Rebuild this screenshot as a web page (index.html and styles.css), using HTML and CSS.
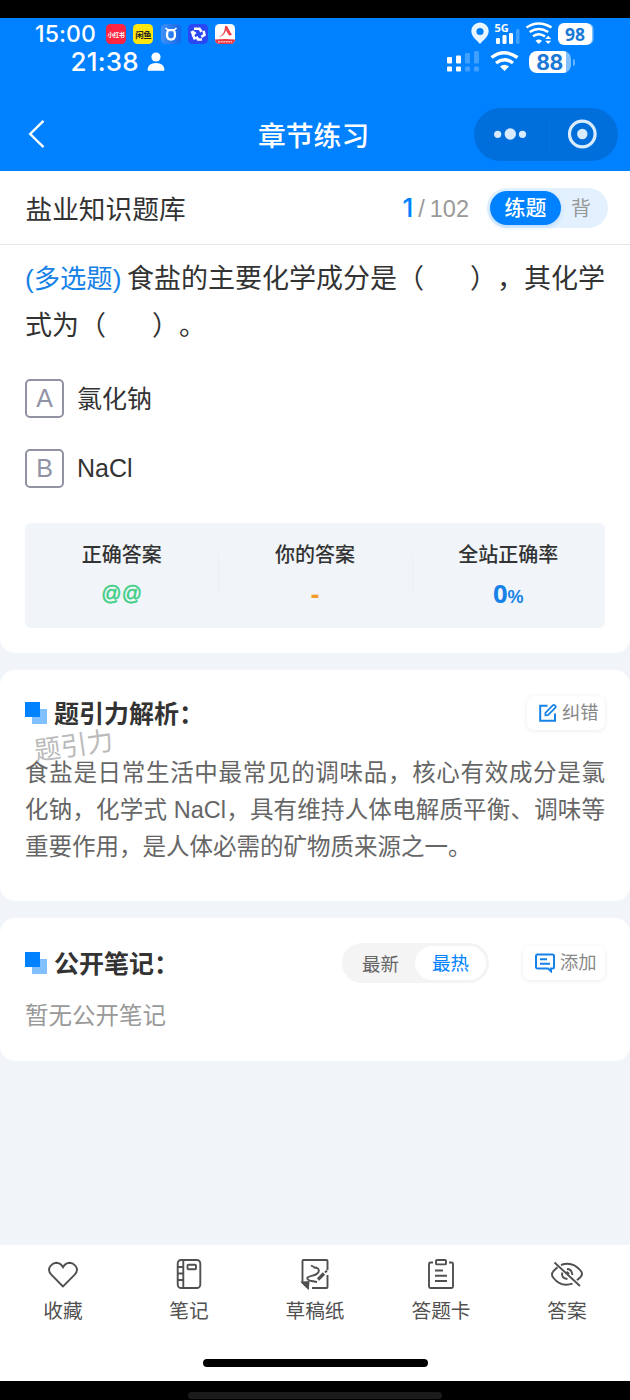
FILE: index.html
```
<!DOCTYPE html>
<html lang="zh-CN">
<head>
<meta charset="utf-8">
<title>章节练习</title>
<link rel="stylesheet" href="styles.css">
</head>
<body>
<div class="phone">
  <header class="header">
    <div class="status status-outer">
      <span class="time-outer">15:00</span>
      <div class="apps">
        <span class="app app-red">小红书</span>
        <span class="app app-yellow">闲鱼</span>
        <svg class="app app-sky" viewBox="0 0 20 20"><path d="M4.500 4 7 6.200M15.500 4 13 6.200" stroke="#fff" stroke-width="1.600"/><path d="M7.300 6.200Q6 8 6 11q0 4.500 4 4.500t4-4.500q0-3-1.300-4.800Z" fill="none" stroke="#fff" stroke-width="2.300"/></svg>
        <svg class="app app-indigo" viewBox="0 0 20 20"><g fill="none" stroke="#fff" stroke-width="2.600"><path d="M6 4.800h5.500l2 3M15.500 6.800l1 4-3.200 2M14 15.500h-4l-1.500-3M7 15.500 5 11l2.500-2.800M3 9l3-1.500"/></g></svg>
        <svg class="app app-white" viewBox="0 0 20 20"><path d="M4 13Q10 10 10 2l2 0 5 9-3 .5-3-5Q9 12 4 13Z" fill="#f04450"/><path d="M0 15.500Q10 14.500 20 15.500V20H0Z" fill="#ee3341"/><path d="M3 17.800h14" stroke="#fbb" stroke-width="1.400" stroke-dasharray="2 .6"/></svg>
      </div>
      <svg class="signals-outer" viewBox="0 0 82 32" width="82" height="32">
        <g transform="translate(0 3)">
        <path d="M9 1.500a8.700 8.700 0 0 1 8.700 8.700C17.700 16 11 20 9 23 7 20 .3 16 .3 10.200A8.700 8.700 0 0 1 9 1.500Zm0 5.400a3.600 3.600 0 1 0 0 7.200 3.600 3.600 0 0 0 0-7.200Z" fill="#eaf6ff" fill-rule="evenodd"/>
        <text x="23.500" y="10.500" class="label-5g">5G</text>
        <g fill="#fff"><rect x="25" y="17" width="4" height="6" rx="1.200"/><rect x="31.500" y="14" width="4" height="9" rx="1.200"/><rect x="38" y="12" width="4" height="11" rx="1.200"/><rect x="45" y="8" width="3.500" height="15" rx="1.200" opacity=".25"/></g>
        <g fill="none" stroke="#fff" stroke-width="2.500"><path d="M55.500 6.500q12-8 25 0"/><path d="M58.700 11q9-6 18.500 0"/><path d="M62 15.300q6-4.200 12 .2"/></g>
        <path d="M64.500 19.800q3.500-2.500 6.500 0L67.700 23Z" fill="#fff"/><path d="m74.200 18 3-3.200 3 3.200ZM74.200 19.800h6l-3 3.200Z" fill="#fff"/>
        </g>
      </svg>
      <span class="battery battery-outer">98</span>
    </div>
    <div class="status status-inner">
      <span class="time-inner">21:38</span>
      <svg class="person" viewBox="0 0 18 20" width="18" height="20"><circle cx="9" cy="5" r="4.600" fill="#fff"/><path d="M.5 18Q1 11 9 11t8.500 7q0 .8-1 .8h-15q-1 0-1-.8Z" fill="#fff"/></svg>
      <svg class="signals-inner" viewBox="0 0 72 24" width="72" height="24">
        <g fill="#fff"><rect x="0" y="7" width="5" height="6.500" rx="1"/><rect x="0" y="16.500" width="5" height="5" rx="1"/><rect x="9" y="5.500" width="5" height="8" rx="1"/><rect x="9" y="16.500" width="5" height="5" rx="1"/></g>
        <g fill="#fff" opacity=".25"><rect x="18" y="3" width="5" height="10.500" rx="1"/><rect x="18" y="16.500" width="5" height="5" rx="1"/><rect x="27" y="1" width="5" height="12.500" rx="1"/><rect x="27" y="16.500" width="5" height="5" rx="1"/></g>
        <g fill="none" stroke="#fff" stroke-width="3.400"><path d="M44.500 7.500q12.500-9.500 26 0"/><path d="M49 13q8.500-6.500 17 0"/></g><path d="M53 16.500q4.500-3.500 9 0L57.500 21Z" fill="#fff"/>
      </svg>
      <span class="battery battery-inner">88</span>
      <i class="battery-tip"></i>
    </div>
    <nav class="nav">
      <svg class="back" viewBox="0 0 18 30" width="18" height="30"><path d="M16.500 1.800 3.200 15 16.500 28.200" fill="none" stroke="#fff" stroke-width="2.400"/></svg>
      <h1 class="nav-title">章节练习</h1>
      <div class="capsule">
        <svg viewBox="0 0 72 53"><g fill="#d9ebff"><circle cx="23.700" cy="26.300" r="3.600"/><circle cx="36.300" cy="26" r="5.700"/><circle cx="48.500" cy="26.300" r="3.600"/></g></svg>
        <svg class="capsule-close" viewBox="0 0 72 53"><circle cx="36.300" cy="26" r="12.800" fill="none" stroke="#d9ebff" stroke-width="3.200"/><circle cx="36.300" cy="26" r="5.200" fill="#d9ebff"/></svg>
      </div>
    </nav>
  </header>

  <section class="card card-question">
    <div class="bank">
      <h2 class="bank-title">盐业知识题库</h2>
      <div class="progress"><b>1</b><span class="slash">/</span><span>102</span></div>
      <div class="mode"><span class="mode-on">练题</span><span class="mode-off">背</span></div>
    </div>
    <p class="question"><span class="q-type">(多选题)</span>食盐的主要化学成分是（<i class="blank"></i>），其化学<br>式为（<i class="blank"></i>）。</p>
    <div class="options">
      <div class="option"><span class="key">A</span><span class="option-text">氯化钠</span></div>
      <div class="option"><span class="key">B</span><span>NaCl</span></div>
    </div>
    <div class="stats">
      <div class="stat"><span>正确答案</span><b class="green">@@</b></div>
      <div class="stat"><span>你的答案</span><b class="orange">-</b></div>
      <div class="stat"><span>全站正确率</span><b class="blue">0<small>%</small></b></div>
    </div>
  </section>

  <section class="card card-analysis">
    <div class="head">
      <i class="mark"></i><h3>题引力解析：</h3>
      <button class="chip"><svg viewBox="0 0 20 20" width="20" height="20"><path d="M9.500 2.800H2.200v15H17v-7.300" fill="none" stroke="#1682e8" stroke-width="2"/><path d="m7.400 9.800 7.600-7.600q.8-.8 1.600 0l.9.900q.7.800 0 1.500l-7.600 7.600-2.500.1Z" fill="none" stroke="#1682e8" stroke-width="1.700"/></svg><span>纠错</span></button>
    </div>
    <span class="watermark">题引力</span>
    <div class="analysis">
      <p class="full">食盐是日常生活中最常见的调味品，核心有效成分是氯</p>
      <p class="full">化钠，化学式 NaCl，具有维持人体电解质平衡、调味等</p>
      <p>重要作用，是人体必需的矿物质来源之一。</p>
    </div>
  </section>

  <section class="card card-notes">
    <div class="head">
      <i class="mark"></i><h3>公开笔记：</h3>
      <div class="sort"><span>最新</span><span class="sort-on">最热</span></div>
      <button class="chip chip-add"><svg viewBox="0 0 22 20" width="22" height="20"><path d="M3.500 1.500h15q1.500 0 1.500 1.500v11q0 1.500-1.500 1.500H17v2.800l-3-2.800H3.500Q2 15.500 2 14V3Q2 1.500 3.500 1.500Z" fill="none" stroke="#1682e8" stroke-width="2"/><path d="M6 6.300h7M6 10.800h10" stroke="#1682e8" stroke-width="2"/></svg><span>添加</span></button>
    </div>
    <p class="empty">暂无公开笔记</p>
  </section>

  <footer class="tabs">
    <div class="tab"><svg viewBox="0 0 32 32"><path d="M16 28.500 4.300 16.700Q.3 12.300 3.400 8 5.900 5 9.300 4.800q4.200.2 6.700 4.400 2.500-4.200 6.700-4.400 3.400.2 5.900 3.200 3.100 4.300-.9 8.700Z"/></svg><span>收藏</span></div>
    <div class="tab"><svg viewBox="0 0 32 32"><rect x="4.700" y="2" width="22.600" height="28" rx="3.500"/><path d="M10.300 2v28M5 9h5M5 15.500h5M5 22h5"/><rect x="14.500" y="6.700" width="8.500" height="4.600" rx="1"/></svg><span>笔记</span></div>
    <div class="tab"><svg viewBox="0 0 32 32"><path d="M28.500 12V3q0-1-1-1H4.500q-1 0-1 1v21.500L9 30M13 30h14.500q1 0 1-1V17M12 7.500l5 2.500M14.500 9.500q6.500 0 5 4.500c-2 4-7 3-11 5.500q-1 2.500 4 3.500l5.500 1"/><path d="m3.500 24.500 6-.5-.5 6Z" fill="#505050"/><path d="m19 21.500 6-6" stroke-width="3.200"/><path d="m26 14.500 2-2"/></svg><span>草稿纸</span></div>
    <div class="tab"><svg viewBox="0 0 32 32"><path d="M8 4.500H5.500Q4 4.500 4 6v22.500Q4 30 5.500 30h21q1.500 0 1.500-1.500V6q0-1.500-1.500-1.500H24"/><rect x="11" y="2" width="10" height="4.400" rx="1"/><path d="M10 12.500h8M10 17.800h12M10 23h12"/></svg><span>答题卡</span></div>
    <div class="tab"><svg viewBox="0 0 32 32"><path d="M3.500 4.500 29 28M10 7Q21 2.700 29.500 12.500q3 3.500 0 6.500L26 22.200M21.500 25.700Q10 29.500 2.500 20q-3-3.500 0-7L6.500 9.200M16 11q5 .2 5.300 6M11.300 14.500q-1.300 6 5.200 6.500M15.500 14q1.500.5 2.500 2"/></svg><span>答案</span></div>
  </footer>
  <div class="home"><i></i></div>
  <div class="home-outer"><i></i></div>
</div>
</body>
</html>
```

FILE: styles.css
```
* { box-sizing: border-box; margin: 0; padding: 0; }
body {
  background: #000;
  color: #333;
  font-family: "Liberation Sans", "Noto Sans CJK SC", sans-serif;
  text-spacing-trim: space-all;
}
i { font-style: normal; }
svg { display: block; flex: none; }
.phone {
  width: 630px;
  height: 1400px;
  padding-top: 18px;
  background: #f1f5f9 linear-gradient(#000 18px, transparent 18px);
  display: flex;
  flex-direction: column;
  overflow: hidden;
  white-space: nowrap;
}

/* Header */
.header { height: 153px; background: #0081ff; color: #fff; flex: none; }
.status { display: flex; align-items: center; font-family: Inter, "Noto Sans CJK SC", sans-serif; }
.status-outer { height: 32px; padding-left: 35px; }
.time-outer { width: 71px; font-size: 23px; font-weight: 500; letter-spacing: .1px; }
.apps { display: flex; gap: 7.300px; width: 365px; }
.app {
  width: 20px; height: 20px; border-radius: 4.500px; flex: none;
  display: flex; align-items: center; justify-content: center;
  font: 700 6px "Noto Sans CJK SC", sans-serif; letter-spacing: -.4px;
}
.app-red { background: #ff2442; }
.app-yellow { background: #ffe60f; color: #222; font-size: 8.500px; }
.app-sky { background: linear-gradient(90deg, #3e91f7, #1766e8); }
.app-indigo { background: #2947f5; }
.app-white { background: #fff; }
.signals-outer { margin-right: 5px; overflow: visible; }
.label-5g { font: 700 11px "Open Sans", sans-serif; fill: #fff; }
.battery {
  display: flex; align-items: center; justify-content: center; flex: none;
  background: #fff; color: #1a78d6; font-weight: 600;
}
.battery-outer { width: 34px; height: 22px; border-radius: 6px; font: 700 17.500px "Noto Sans", sans-serif; box-shadow: 2px 0 0 -0.500px #80c0ff; }
.status-inner { height: 24px; padding-left: 70.500px; }
.time-inner { width: 76px; margin-top: -2px; font-size: 26px; font-weight: 500; letter-spacing: .2px; }
.signals-inner { margin-left: 282px; }
.person { margin-top: -1px; }
.battery-inner {
  width: 42px; height: 22px; margin-left: 10px; border-radius: 8px;
  font-size: 21px; font-weight: 700; letter-spacing: -.3px; background: linear-gradient(90deg, #fff 37px, #80c0ff 37px);
}
.battery-tip { width: 2px; height: 7px; margin-left: 2px; border-radius: 0 2px 2px 0; background: #66b3ff; }
.nav { display: flex; align-items: center; height: 74px; margin-top: 23px; padding: 0 12px 0 27px; }
.nav-title { width: 216px; margin-left: 213px; font-size: 27.800px; font-weight: 500; line-height: 40px; padding-top: 5px; }
.capsule { display: flex; width: 144px; height: 53px; border-radius: 27px; background: #006fdc; }
.capsule svg { width: 72px; height: 53px; }
.capsule-close { background: linear-gradient(#0069d0, #0069d0) 0 50% / 1px 35px no-repeat; }

/* Cards */
.card { background: #fff; border-radius: 15px; padding: 0 25px; flex: none; }
.card-question { height: 482px; border-radius: 0 0 15px 15px; }
.bank { display: flex; align-items: center; height: 74px; margin: 0 -25px; padding: 0 22px 0 25.500px; border-bottom: 1px solid #e6e6e6; }
.bank-title { flex: 1; font-size: 26.700px; font-weight: 400; line-height: 40px; padding-top: 4px; }
.progress { display: flex; align-items: baseline; margin-right: 18px; font-size: 23.500px; color: #999; }
.progress b { font: 500 26px Inter, sans-serif; color: #0081ff; }
.slash { margin: 0 5px; }
.mode { display: flex; align-items: center; width: 121px; height: 40px; padding: 0 3px; border-radius: 20px; background: #e3f1ff; }
.mode-on { width: 71px; height: 34px; border-radius: 17px; background: #0081ff; color: #fff; font-size: 21px; font-weight: 500; line-height: 34px; text-align: center; box-shadow: 0 2px 5px #0081ff33; }
.mode-off { margin-left: 10px; padding-top: 2px; font-size: 20px; line-height: 34px; color: #999; }
.question { padding-top: 11px; font-size: 27px; line-height: 47px; color: #333; }
.q-type { display: inline-block; width: 102px; font-size: 26.300px; color: #1682e8; }
.blank { display: inline-block; width: 46px; }
.options { display: flex; flex-direction: column; gap: 32px; margin-top: 29px; }
.option { display: flex; align-items: center; gap: 13px; height: 38px; font-size: 25px; }
.option-text { margin-top: -3px; }
.key { display: flex; align-items: center; justify-content: center; width: 39px; height: 39px; border: 2px solid #9193a5; border-radius: 5px; color: #9193a5; font-size: 25px; }
.stats { display: flex; align-items: center; height: 105px; margin-top: 36px; border-radius: 6px; background: #f1f5f9; }
.stat { flex: 1; display: flex; flex-direction: column; align-items: center; font-size: 20px; font-weight: 500; padding-bottom: 2px; }
.stat span, .stat b { height: 40px; line-height: 40px; }
.stat + .stat { background: linear-gradient(#ebeff4, #ebeff4) 0 45% / 1px 38px no-repeat; }
.stat .green { line-height: 37px; font-size: 20px; font-weight: 400; color: #3ecf86; -webkit-text-stroke: .5px #3ecf86; }
.orange { font-size: 27px; color: #f39c2b; }
.stat .blue { font: 700 25.500px/36px "Open Sans", sans-serif; color: #1682e8; }
.blue small { font: 700 18px "Liberation Sans", sans-serif; }
.card-analysis { height: 231px; margin-top: 17px; position: relative; padding-top: 23px; }
.head { display: flex; align-items: center; height: 40px; }
.mark { width: 22px; height: 22px; margin-right: 7px; background: linear-gradient(#0081ff, #0081ff) 0 0 / 15px 15px no-repeat, linear-gradient(#80c0ff, #80c0ff) 7px 7px / 15px 15px no-repeat; }
.head h3 { font-size: 25px; font-weight: 700; line-height: 38px; flex: 1; padding-top: 2px; }
.chip { display: flex; align-items: center; gap: 4px; width: 78px; height: 34px; padding-left: 11px; border: 0; border-radius: 7px; background: #fff; box-shadow: 0 1px 5px #00000014; color: #888; font: 18.300px/26px "Noto Sans CJK SC", sans-serif; }
.chip span { margin-top: -4px; }
.watermark { position: absolute; left: 34px; top: 57px; font-size: 26.500px; line-height: 38px; color: #bbb; transform: rotate(-8deg); }
.analysis { margin-top: 22px; font-size: 23.500px; line-height: 37px; color: #666; }
.full { text-align: justify; text-align-last: justify; }
.card-notes { height: 143px; margin-top: 17px; padding-top: 25px; }
.sort { display: flex; align-items: center; width: 147px; height: 40px; padding: 0 3px 0 20px; margin-right: 34px; justify-content: space-between; border-radius: 20px; background: #f4f4f4; font-size: 18.500px; color: #666; }
.sort-on { width: 71px; height: 34px; line-height: 35px; border-radius: 17px; background: #fff; text-align: center; color: #0081ff; }
.chip-add { width: 82px; }
.empty { margin-top: 15px; font-size: 23.500px; line-height: 36px; color: #999; }

/* Bottom bar */
.tabs { display: flex; height: 100px; margin-top: auto; background: #fff; flex: none; }
.tab { flex: 1; display: flex; flex-direction: column; align-items: center; padding-top: 13px; font-size: 19.700px; line-height: 30px; color: #505050; }
.tab svg { width: 32px; height: 32px; margin-bottom: 6px; fill: none; stroke: #505050; stroke-width: 1.900; }
.home { height: 36px; padding-top: 14px; background: #fff; flex: none; }
.home i { display: block; width: 225px; height: 8px; margin: 0 auto; border-radius: 4px; background: #000; }
.home-outer { height: 19px; padding-top: 11px; background: #000; flex: none; }
.home-outer i { display: block; width: 254px; height: 7px; margin: 0 auto; border-radius: 4px; background: #1b1b1b; }
```
